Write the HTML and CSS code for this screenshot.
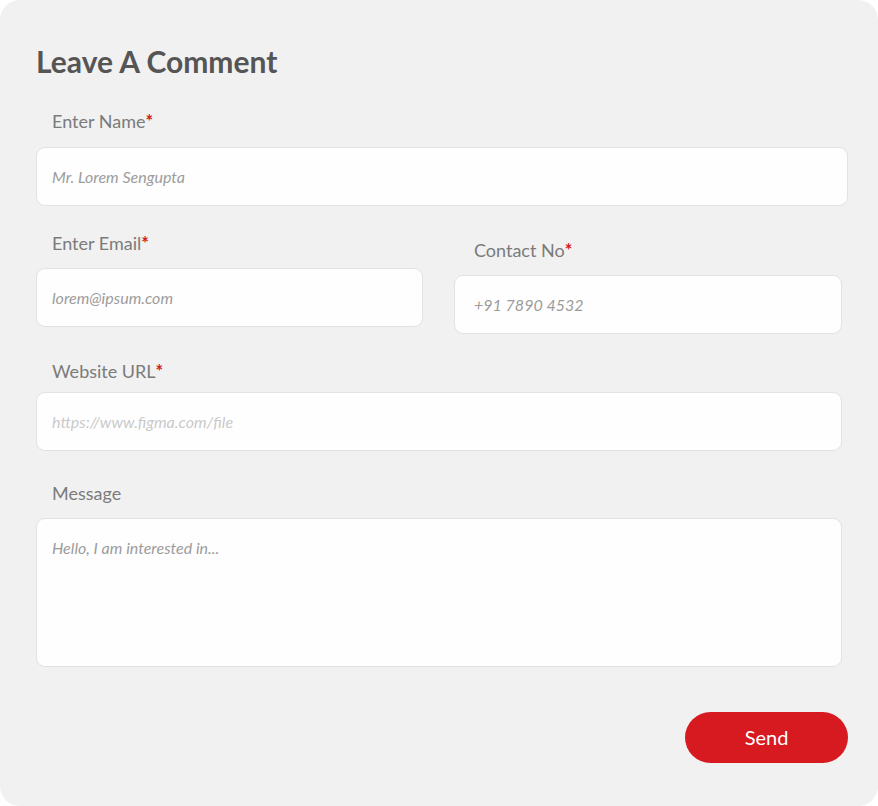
FILE: index.html
```html
<!DOCTYPE html>
<html lang="en">
<head>
<meta charset="utf-8">
<title>Leave A Comment</title>
<link rel="stylesheet" href="styles.css">
</head>
<body>
<form class="card">
  <h1 class="title">Leave A Comment</h1>

  <div class="field field-name">
    <label class="label">Enter Name<span class="req">*</span></label>
    <input class="input input-wide" type="text" placeholder="Mr. Lorem Sengupta">
  </div>

  <div class="row">
    <div class="field field-email">
      <label class="label">Enter Email<span class="req">*</span></label>
      <input class="input" type="text" placeholder="lorem@ipsum.com">
    </div>
    <div class="field field-contact">
      <label class="label label-contact">Contact No<span class="req">*</span></label>
      <input class="input input-contact" type="text" placeholder="+91 7890 4532">
    </div>
  </div>

  <div class="field field-url">
    <label class="label">Website URL<span class="req">*</span></label>
    <input class="input input-light" type="text" placeholder="https://www.figma.com/file">
  </div>

  <div class="field field-message">
    <label class="label">Message</label>
    <textarea class="input textarea" placeholder="Hello, I am interested in..."></textarea>
  </div>

  <div class="actions">
    <button class="send" type="button">Send</button>
  </div>
</form>
</body>
</html>
```

FILE: styles.css
```css
* { box-sizing: border-box; }

html, body {
  margin: 0;
  padding: 0;
  background: #ffffff;
}

body {
  font-family: Lato, "Open Sans", sans-serif;
}

.card {
  width: 878px;
  height: 806px;
  background: #f1f1f1;
  border-radius: 20px;
  padding: 42px 36px 0 36px;
  display: flex;
  flex-direction: column;
}

.title {
  margin: 0;
  font-size: 30px;
  line-height: 38px;
  font-weight: 700;
  color: #555555;
}

.field {
  display: flex;
  flex-direction: column;
}

.label {
  display: block;
  padding-left: 16px;
  font-size: 18px;
  line-height: 22px;
  color: #7b7b7b;
  margin-bottom: 15px;
}

.req {
  color: #d71920;
  font-weight: 700;
}

.input {
  display: block;
  width: 100%;
  height: 59px;
  border: 1px solid #e2e2e2;
  border-radius: 9px;
  background: #fefefe;
  padding: 0 15px;
  font-family: Lato, "Open Sans", sans-serif;
  font-style: italic;
  font-size: 16px;
  color: #9a9a9a;
  outline: none;
}

.input::placeholder {
  color: #9c9c9c;
  opacity: 1;
}

.input-light::placeholder {
  color: #cacaca;
}

.input-wide {
  width: calc(100% + 6px);
}

.input-contact {
  padding-left: 19px;
}

.field-name { margin-top: 30px; }

.row {
  display: grid;
  grid-template-columns: 387px 388px;
  column-gap: 31px;
  margin-top: 26px;
}

.field-email .label { margin-bottom: 14px; }

.field-contact { padding-top: 7px; }

.label-contact {
  padding-left: 20px;
  margin-bottom: 14px;
}

.field-url { margin-top: 26px; }
.field-url .label { margin-bottom: 10px; }

.field-message { margin-top: 31px; }
.field-message .label { margin-bottom: 14px; }

.textarea {
  height: 149px;
  resize: none;
  padding: 19px 15px;
  line-height: 20px;
}

.actions {
  display: flex;
  justify-content: flex-end;
  margin-top: 45px;
  margin-right: -6px;
}

.send {
  width: 163px;
  height: 51px;
  border: none;
  border-radius: 26px;
  background: #d71920;
  color: #ffffff;
  font-family: Lato, "Open Sans", sans-serif;
  font-size: 20px;
  padding: 0 0 2px 0;
  cursor: pointer;
}
```
